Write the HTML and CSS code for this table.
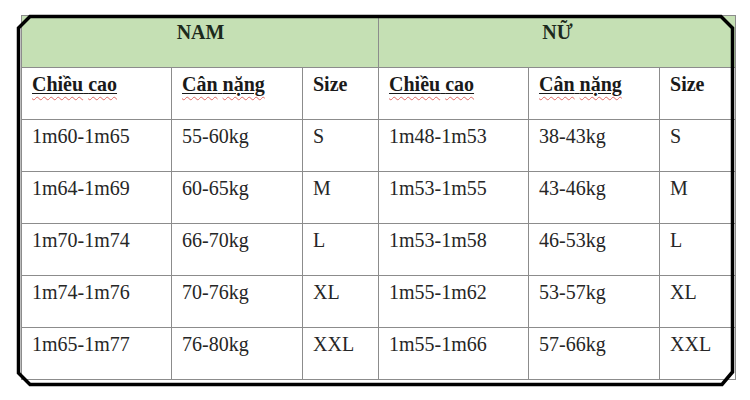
FILE: index.html
```html
<!DOCTYPE html>
<html lang="vi">
<head>
<meta charset="utf-8">
<title>Bảng size</title>
<link rel="stylesheet" href="styles.css">
</head>
<body>
<div class="page">
  <table class="size-table">
    <colgroup>
      <col class="c-h"><col class="c-w"><col class="c-s">
      <col class="c-h"><col class="c-w"><col class="c-s">
    </colgroup>
    <tr class="group">
      <th colspan="3">NAM</th>
      <th colspan="3">NỮ</th>
    </tr>
    <tr class="head">
      <th><span class="ul"><span class="spell">Chiều</span> <span class="spell">cao</span></span></th>
      <th><span class="ul"><span class="spell">Cân</span> <span class="spell">nặng</span></span></th>
      <th>Size</th>
      <th><span class="ul"><span class="spell">Chiều</span> <span class="spell">cao</span></span></th>
      <th><span class="ul"><span class="spell">Cân</span> <span class="spell">nặng</span></span></th>
      <th>Size</th>
    </tr>
    <tr><td>1m60-1m65</td><td>55-60kg</td><td>S</td><td>1m48-1m53</td><td>38-43kg</td><td>S</td></tr>
    <tr><td>1m64-1m69</td><td>60-65kg</td><td>M</td><td>1m53-1m55</td><td>43-46kg</td><td>M</td></tr>
    <tr><td>1m70-1m74</td><td>66-70kg</td><td>L</td><td>1m53-1m58</td><td>46-53kg</td><td>L</td></tr>
    <tr><td>1m74-1m76</td><td>70-76kg</td><td>XL</td><td>1m55-1m62</td><td>53-57kg</td><td>XL</td></tr>
    <tr><td>1m65-1m77</td><td>76-80kg</td><td>XXL</td><td>1m55-1m66</td><td>57-66kg</td><td>XXL</td></tr>
  </table>
  <svg class="frame" width="750" height="400" viewBox="0 0 750 400" aria-hidden="true">
    <polygon points="18.5,28 30,16.5 721,16.5 732.5,28 732.5,372 722,384.5 30,384.5 18.5,373" fill="none" stroke="#000" stroke-width="3.5" stroke-linejoin="miter"/>
  </svg>
</div>
</body>
</html>
```
FILE: styles.css
```css
html, body {
  margin: 0;
  padding: 0;
  background: #ffffff;
}
.page {
  position: relative;
  width: 750px;
  height: 400px;
  padding: 15px 0 0 21px;
  box-sizing: border-box;
  font-family: "Liberation Serif", "Times New Roman", serif;
}
.size-table {
  border-collapse: collapse;
  table-layout: fixed;
  width: 714px;
  font-family: "Liberation Serif", "Times New Roman", serif;
  font-size: 20px;
  color: #262626;
}
.c-h { width: 150px; }
.c-w { width: 131px; }
.c-s { width: 76px; }
.size-table th,
.size-table td {
  font-family: "Liberation Serif", "Times New Roman", serif;
  border: 1px solid #8c8c8c;
  height: 52px;
  box-sizing: border-box;
  padding: 5px 9px 0 10px;
  vertical-align: top;
  text-align: left;
  line-height: 23px;
  white-space: nowrap;
}
.size-table th { font-weight: bold; color: #1a1a1a; }
.group th {
  background: #c5e0b4;
  text-align: center;
  color: #1c2a1c;
}
.ul {
  text-decoration: underline;
  text-decoration-thickness: 1px;
  text-underline-offset: 2px;
}
.spell {
  text-decoration: underline wavy #e06a64;
  text-decoration-thickness: 1px;
  text-underline-offset: 5px;
}
.frame {
  position: absolute;
  left: 0;
  top: 0;
  pointer-events: none;
}
```
